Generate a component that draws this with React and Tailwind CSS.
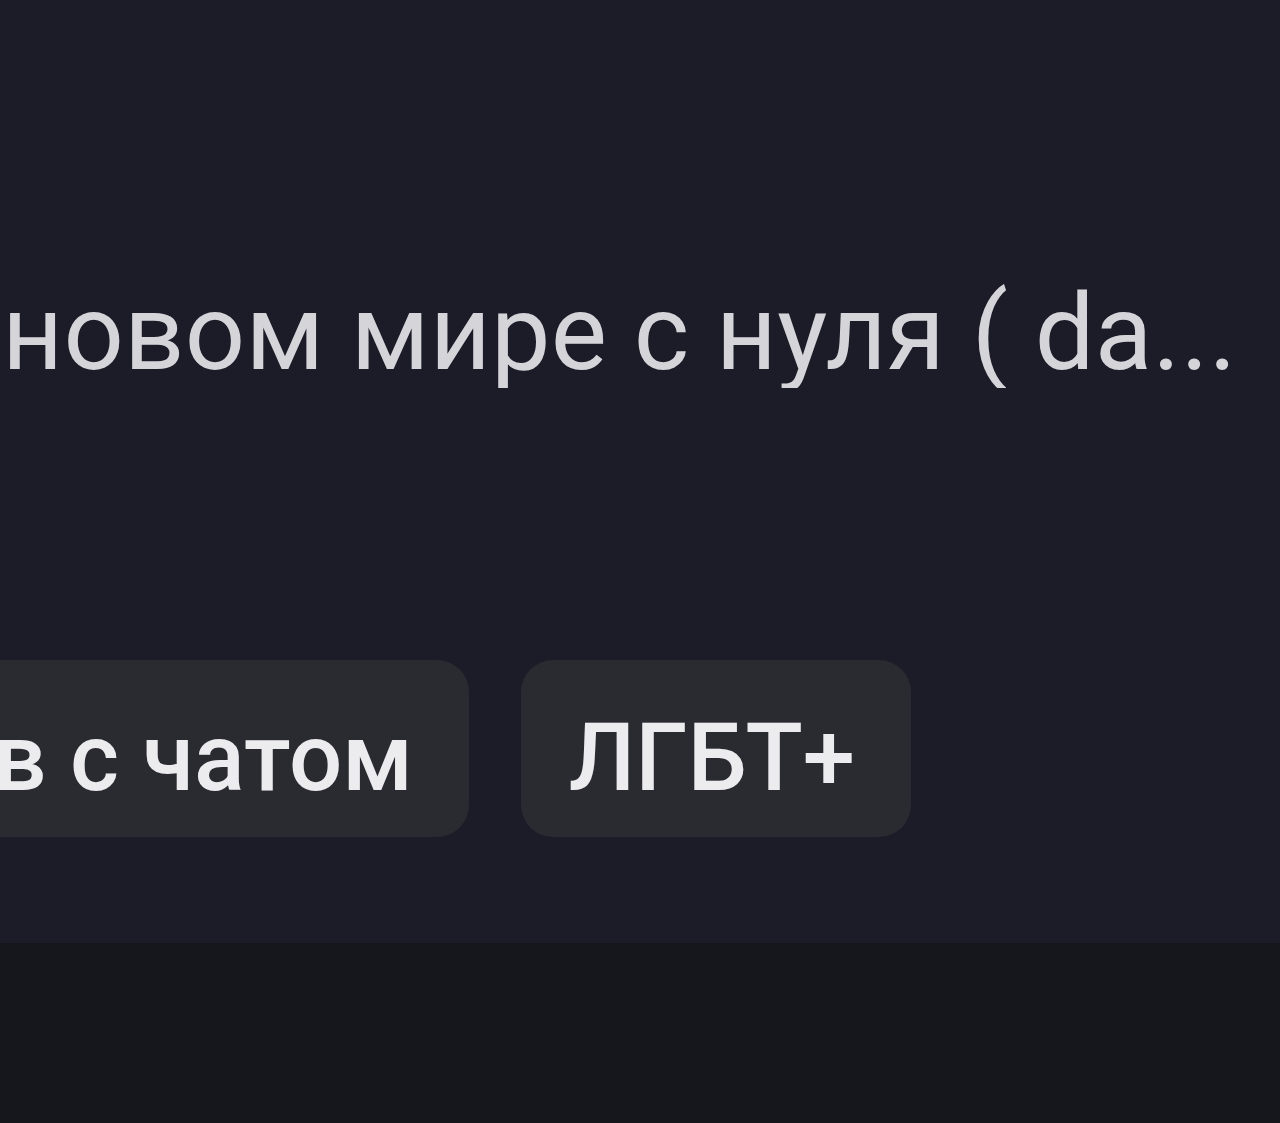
export default function App() {
  const tags = ['Ролевая игра в с чатом', 'ЛГБТ+'];

  return (
    <div className="h-[1123px] w-[1280px] flex flex-col bg-[#16171c] font-['Roboto',_'Noto_Sans',_sans-serif] overflow-hidden">
      {/* Card body */}
      <div className="h-[943px] bg-[#1c1c28] flex flex-col">
        <div className="h-[278px]" />
        {/* Title, clipped on the left like the zoomed crop */}
        <div className="w-[1237px] flex justify-end overflow-hidden">
          <p className="whitespace-nowrap text-[106px] leading-[110px] text-[#d4d4d9] tracking-[0.2px]">
            Выживание в новом мире с нуля ( da...
          </p>
        </div>
        <div className="h-[272px]" />
        {/* Tags */}
        <div className="w-[911px] flex justify-end gap-[52px] overflow-hidden">
          {tags.map((t) => (
            <span
              key={t}
              className="shrink-0 h-[177px] flex items-center pt-[20px] pl-[48px] pr-[56px] rounded-[32px] bg-[#2a2a31] text-[94px] font-medium text-[#ececee] whitespace-nowrap"
            >
              {t}
            </span>
          ))}
        </div>
      </div>
      <div className="flex-1 bg-[#16171c]" />
    </div>
  );
}
